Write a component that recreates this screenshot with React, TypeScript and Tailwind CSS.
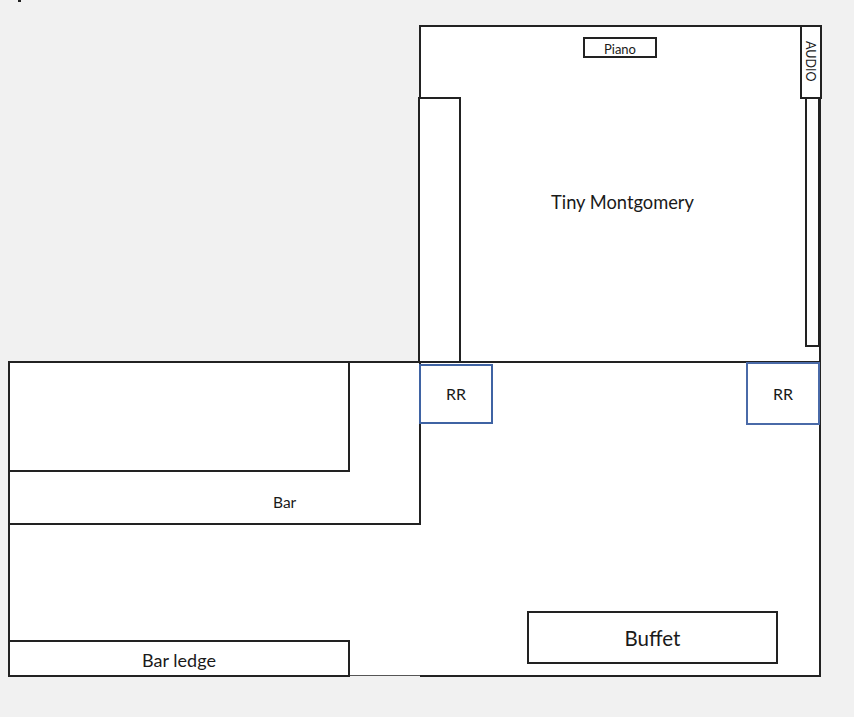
const box = "absolute box-border border-2 border-[#222222] bg-white";
const font = { fontFamily: 'Lato, "Open Sans", sans-serif' };

export default function App() {
  return (
    <div className="relative w-[854px] h-[717px] overflow-hidden bg-[#f1f1f1] text-[#1a1a1a]" style={font}>
      <div className="absolute left-[18px] top-0 w-[3px] h-[2px] bg-[#222222]" />
      {/* Rooms */}
      <div className={`${box} left-[419px] top-[25px] w-[402px] h-[339px]`} />
      <div className={`${box} left-[8px] top-[361px] w-[813px] h-[316px]`} />
      <div className="absolute left-[350px] top-[675px] w-[70px] h-[2px] bg-[#f1f1f1]" />
      <div className="absolute left-[350px] top-[675px] w-[70px] h-px bg-[#555555]" />

      {/* Bar */}
      <div className={`${box} left-[8px] top-[361px] w-[413px] h-[164px]`} />
      <div className={`${box} left-[8px] top-[361px] w-[342px] h-[111px]`} />
      <div className="absolute left-[273px] top-[493px] text-[15.5px] leading-[19px]">Bar</div>

      {/* Bar ledge */}
      <div className={`${box} flex items-center justify-center pt-[3px] left-[8px] top-[640px] w-[342px] h-[37px] text-[18px]`}>Bar ledge</div>

      {/* Buffet */}
      <div className={`${box} flex items-center justify-center pt-[2px] left-[527px] top-[611px] w-[251px] h-[53px] text-[20.5px]`}>Buffet</div>

      {/* Top room fixtures */}
      <div className={`${box} left-[418px] top-[97px] w-[43px] h-[266px]`} />
      <div className={`${box} left-[805px] top-[97px] w-[15px] h-[250px]`} />
      <div className={`${box} flex items-center justify-center pt-[3px] left-[583px] top-[37px] w-[74px] h-[21px] text-[13px] leading-[14px]`}>Piano</div>
      <div className={`${box} flex items-center justify-center left-[800px] top-[25px] w-[22px] h-[74px] pr-[2px] pb-[2px]`}>
        <div className="text-[12.5px] leading-[16px] [writing-mode:vertical-rl]">AUDIO</div>
      </div>
      <div className="absolute left-[551px] top-[191px] text-[18.3px] leading-[23px]">Tiny Montgomery</div>

      {/* Rest rooms */}
      <div className="absolute box-border flex items-center justify-center left-[419px] top-[364px] w-[74px] h-[60px] border-2 border-[#3f63a3] bg-white text-[16px]">RR</div>
      <div className="absolute box-border flex items-center justify-center left-[746px] top-[362px] w-[74px] h-[63px] border-2 border-[#4a6aa8] bg-white text-[16px]">RR</div>
    </div>
  );
}
